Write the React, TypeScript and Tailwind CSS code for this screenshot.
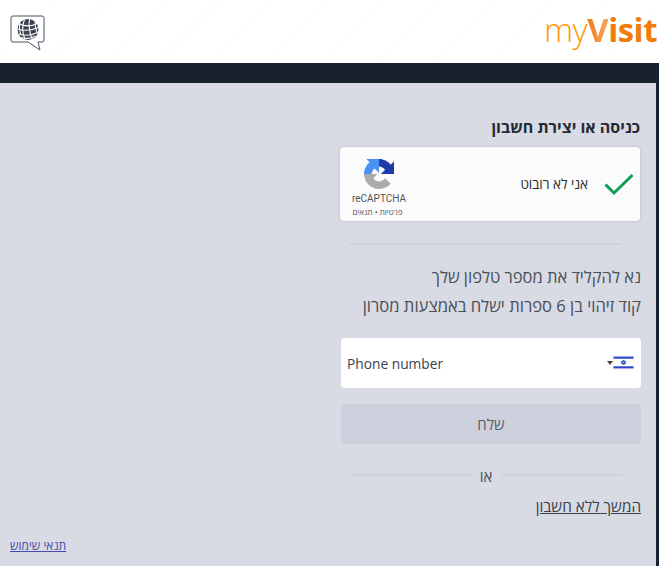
function GlobeBubble() {
  return (
    <svg width="36" height="36" viewBox="0 0 36 36" fill="none">
      <path d="M3 1h29a2 2 0 0 1 2 2v22a2 2 0 0 1-2 2h-4l2 8-12-8h-15a2 2 0 0 1-2-2v-22a2 2 0 0 1 2-2z" stroke="#4b5563" strokeWidth="1" fill="#fff" />
      <circle cx="18" cy="14.500" r="10.500" fill="#3a4352" />
      <g stroke="#fff" strokeWidth="1.100">
        <path d="M9 9c6 2.500 13 2.500 19-1" />
        <path d="M7.500 14c7 2 14 1.500 21-1.500" />
        <path d="M8.500 19c6 2 13 1.500 19-1.500" />
        <path d="M11.500 22.500c5 1.500 10 1 14-1.500" />
        <path d="M14.500 4.500c-2.500 6-2 14 0.500 20" />
        <path d="M19.500 4c-1 6 0 15 3 20.500" />
        <path d="M25 6.500c0 5 1 9 2.500 12" />
        <path d="M10 8c-1 4-.5 8 1 12" />
      </g>
    </svg>
  );
}

function RecaptchaLogo() {
  return (
    <svg width="30" height="30" viewBox="0 0 64 64">
      <path d="M0 32h28l-8 9c3 5 7 7 12 7s9-2 13-7l12 12c-6 7-15 11-25 11C15 64 1 50 0 32z" fill="#ababab" />
      <path d="M32 0H5l7 7C5 13 0 22 0 32h16c.5-5 3-9 7-12l9 10z" fill="#4a90f5" />
      <path d="M32 0c10 0 19 5 25 12l7-7v27H36l9-9c-3-4-8-7-13-7z" fill="#1c3aa9" />
    </svg>
  );
}

function IsraelFlag() {
  return (
    <svg width="21" height="15" viewBox="0 0 21 15">
      <rect x="0.250" y="0.250" width="20.500" height="14.500" rx="1" fill="#fff" stroke="#e3e7f5" strokeWidth="0.500" />
      <rect x="0.500" y="1.600" width="20" height="2.100" fill="#2545c4" />
      <rect x="0.500" y="11.300" width="20" height="2.100" fill="#2545c4" />
      <path d="M10.500 5l2.200 3.700h-4.400z M10.500 10l-2.200-3.700h4.400z" fill="#9db0ea" stroke="#2f52c9" strokeWidth="0.900" />
    </svg>
  );
}

function Divider({ label }: { label?: string }) {
  return (
    <div className="mr-[19px] ml-[9px] flex items-center">
      <div className="h-0.5 flex-1 bg-[#cfd2de]" />
      {label && <span className="w-[29px] pt-0.5 text-center text-[15px] leading-5 text-[#4a4f5a]">{label}</span>}
      {label && <div className="h-0.5 flex-1 bg-[#cfd2de]" />}
    </div>
  );
}

export default function App() {
  return (
    <div dir="rtl" className="flex h-[566px] w-[659px] flex-col overflow-hidden bg-[#18222f] font-['Open_Sans','Noto_Sans','Liberation_Sans',sans-serif]">
      <header className="flex h-[63px] items-start justify-between bg-[repeating-linear-gradient(135deg,#ffffff_0,#ffffff_38px,#fbfbfb_38px,#fbfbfb_39px)] pr-0.5 pl-2.5">
        <div dir="ltr" className="mt-[10px] font-['Open_Sans',sans-serif] text-[33px] leading-10 tracking-[-0.5px] text-[#ff9a0a]">
          <span className="font-light">my</span>
          <span className="bg-gradient-to-r from-[#f07c0c] to-[#f9a55a] bg-clip-text font-bold text-transparent">V</span>
          <span className="font-bold text-[#f07c0c]">isit</span>
        </div>
        <div className="mt-[15px]">
          <GlobeBubble />
        </div>
      </header>

      <main className="mt-5 mr-[3px] flex flex-1 justify-between bg-[#d8dbe4] pr-[15px] pl-2.5">
        <section className="flex w-[300px] flex-col pt-[34px]">
          <h1 className="mr-px text-base leading-5 font-bold text-[#252b36]">כניסה או יצירת חשבון</h1>

          <div className="mt-2.5 -ml-px mr-px flex h-[74px] items-center justify-between rounded-sm bg-[#fbfbfb] pr-1.5 shadow-[0_0_3px_rgba(0,0,0,0.15)]">
            <div className="flex items-center gap-4">
              <svg width="30" height="24" viewBox="0 0 30 24" fill="none">
                <path d="M1.500 12.500l8.500 8.500L28.500 3" stroke="#0f9d58" strokeWidth="3" />
              </svg>
              <span className="text-[13.5px] text-[#2b2b2b]">אני לא רובוט</span>
            </div>
            <div className="flex w-[78px] flex-col items-center pt-2">
              <RecaptchaLogo />
              <span dir="ltr" className="mt-[4px] font-['Roboto',sans-serif] text-[10px] leading-3 text-[#555]">reCAPTCHA</span>
              <span className="mt-[2px] mr-[3px] text-[8px] leading-[10px] text-[#555]">פרטיות • תנאים</span>
            </div>
          </div>

          <div className="mt-[22px]">
            <Divider />
          </div>

          <p className="mt-[22px] text-[16.5px] leading-5 text-[#4a4f5a]">נא להקליד את מספר טלפון שלך</p>
          <p className="mt-[9px] text-[16.6px] leading-5 text-[#4a4f5a]">קוד זיהוי בן 6 ספרות ישלח באמצעות מסרון</p>

          <div className="mt-[22px] flex h-[50px] items-center justify-between rounded-sm bg-white pr-[7px] pl-1.5">
            <div className="mb-px flex items-center">
              <IsraelFlag />
              <span className="h-0 w-0 border-x-[3px] border-t-[4px] border-x-transparent border-t-[#444]" />
            </div>
            <span dir="ltr" className="pt-[3px] text-[13.75px] text-[#3a3f4a]">Phone number</span>
          </div>

          <button className="mt-4 h-10 rounded-[4px] bg-[#cdd0dd] text-[15px] text-[#5a5f6a]">שלח</button>

          <div className="mt-5">
            <Divider label="או" />
          </div>

          <a className="mt-2.5 self-start text-[15.3px] leading-5 text-[#3a404c] underline">המשך ללא חשבון</a>
        </section>

        <a className="mb-3 self-end text-xs leading-4 text-[#4a4ab0] underline">תנאי שימוש</a>
      </main>
    </div>
  );
}
